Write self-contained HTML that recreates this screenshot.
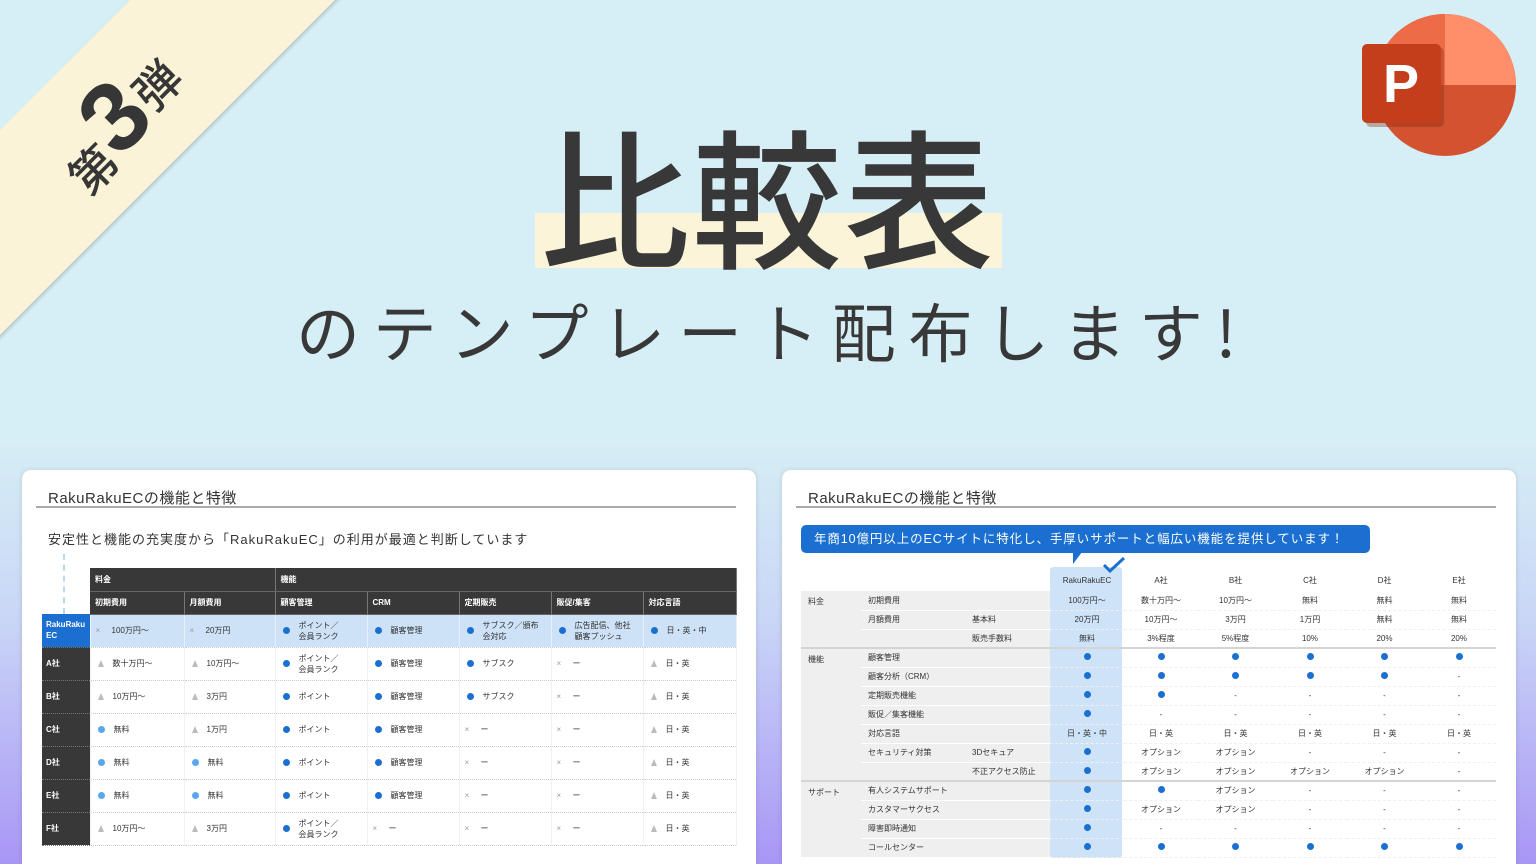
<!DOCTYPE html>
<html><head><meta charset="utf-8">
<style>
*{margin:0;padding:0;box-sizing:border-box}
html{width:1536px;height:864px;overflow:hidden;background:#a996f5}
body{width:1536px;height:864px;overflow:hidden;position:relative;font-family:"Liberation Sans","Noto Sans CJK JP",sans-serif;color:#333;
background:linear-gradient(180deg,#d6eef5 0px,#d6eef5 440px,#c9d6f6 620px,#a996f5 864px)}
.band{position:absolute;width:700px;height:145px;background:#fbf3d8;transform:rotate(-45deg);transform-origin:center;left:-251px;top:61px;box-shadow:0 2px 3px rgba(0,0,0,.18)}
.bandtxt{position:absolute;left:4px;top:66px;width:220px;height:100px;transform:rotate(-45deg);font-family:"Noto Sans CJK JP",sans-serif;font-weight:500;color:#363636;display:flex;align-items:flex-end;justify-content:center;gap:2px}
.title{position:absolute;left:0;width:1536px;top:98px;text-align:center;font-family:"Noto Sans CJK JP",sans-serif;font-weight:500;font-size:150px;line-height:190px;color:#383838;letter-spacing:2px}
.hl{position:absolute;left:535px;top:213px;width:467px;height:55px;background:#fcf4d8}
.sub{position:absolute;left:296px;width:1000px;top:280px;font-family:"Noto Sans CJK JP",sans-serif;font-weight:400;font-size:64px;line-height:100px;letter-spacing:12.8px;color:#383838;white-space:nowrap}
.panel{position:absolute;top:470px;width:734px;height:394px;background:#fff;border-radius:9px 9px 0 0;box-shadow:0 0 6px rgba(0,0,0,.12)}
.ptitle{position:absolute;left:26px;top:17px;font-size:15px;color:#333;letter-spacing:.5px}
.uline{position:absolute;left:14px;top:36px;width:700px;height:2px;background:#aaa}
.lt{position:absolute;left:20px;top:98px;border-collapse:collapse;table-layout:fixed;font-size:8px}
.lt td{height:33px;padding-left:5px;border-bottom:1px dotted #ccc;white-space:nowrap;line-height:11px}
.lt tr.h td{background:#383838;color:#fff;height:23px;border-bottom:1px solid #666;border-right:1px solid #777;font-weight:bold}
.lt td.n{background:#383838;color:#fff;border-bottom:1px dotted #777;font-weight:bold;padding-left:4px}
.lt tr.r td{background:#cde1f7;border-right:1px solid #e8f0fa}
.lt tr.r td.n{background:#1a6fd0}
.lt td{border-right:1px solid #f0f0f0}
.m{display:inline-block;width:16px;color:#999;font-size:8px}
.b{display:inline-block;width:7px;height:7px;border-radius:50%;background:#1a6fd0;margin:0 9px 0 2px;vertical-align:middle}
.lb{background:#5aa6ee}
.tri{display:inline-block;width:0;height:0;border-left:3.5px solid transparent;border-right:3.5px solid transparent;border-bottom:7px solid #bbb;margin:0 9px 0 2px;vertical-align:middle}
.bub{position:absolute;left:19px;top:55px;width:569px;height:28px;background:#1a6fd0;border-radius:5px;color:#fff;font-size:12.5px;line-height:28px;padding-left:13px;letter-spacing:0.9px;white-space:nowrap}
.bub:after{content:"";position:absolute;left:272px;top:27px;border-left:0 solid transparent;border-right:9px solid transparent;border-top:12px solid #1a6fd0}
.hcol{position:absolute;left:268px;top:97px;width:72px;height:291px;background:#cfe3f8;border-radius:3px}
.rt{position:absolute;left:19px;top:100px;border-collapse:collapse;table-layout:fixed;font-size:8px}
.rt td{height:19px;white-space:nowrap;padding:0}
.rt td.c{text-align:center;border-bottom:1px dashed #f0f0f0}
.rt td.g{background:#efefef;padding-left:7px;border-bottom:1px solid #fff}
.rt td.g0{background:#efefef;padding-left:7px;vertical-align:top;padding-top:5px}
.rt tr.sec td{border-top:2px solid #d4d4d4}
.d{display:inline-block;width:7px;height:7px;border-radius:50%;background:#1a6fd0}
</style></head><body>
<div class="band"></div>
<div class="bandtxt"><span style="font-size:46px;line-height:58px">第</span><span style="font-size:98px;line-height:100px;font-family:'Liberation Sans',sans-serif;font-weight:700">3</span><span style="font-size:46px;line-height:86px">弾</span></div>

<svg style="position:absolute;left:1362px;top:14px" width="154" height="142" viewBox="0 0 154 142">
<circle cx="83" cy="71" r="71" fill="#d35230"/>
<path d="M83 0 A71 71 0 0 1 154 71 L83 71 Z" fill="#ff8f6b"/>
<path d="M83 0 A71 71 0 0 0 12 71 L83 71 Z" fill="#ed6c47"/>
<rect x="4" y="33" width="78" height="80" rx="5" fill="#7a2a14" opacity=".35"/>
<rect x="0" y="30" width="79" height="79" rx="5" fill="#c43e1c"/>
<text x="21" y="88" font-family="Liberation Sans" font-weight="bold" font-size="54" fill="#fff">P</text>
</svg>

<div class="hl"></div>
<div class="title">比較表</div>
<div class="sub">のテンプレート配布します!</div>

<div class="panel" style="left:22px">
<div class="ptitle">RakuRakuECの機能と特徴</div>
<div class="uline"></div>
<div style="position:absolute;left:26px;top:59px;font-size:13px;letter-spacing:1px">安定性と機能の充実度から「RakuRakuEC」の利用が最適と判断しています</div>
<div style="position:absolute;left:41px;top:84px;height:60px;border-left:2px dashed #b8d8f2"></div>
<table class="lt">
<colgroup><col style="width:48px"><col style="width:94px"><col style="width:91px"><col style="width:92px"><col style="width:92px"><col style="width:92px"><col style="width:92px"><col style="width:93px"></colgroup>
<tr class="h"><td style="background:transparent;border:none"></td><td colspan="2">料金</td><td colspan="5">機能</td></tr>
<tr class="h"><td style="background:transparent;border:none"></td><td>初期費用</td><td>月額費用</td><td>顧客管理</td><td>CRM</td><td>定期販売</td><td>販促/集客</td><td>対応言語</td></tr>
<tr class="r"><td class="n">RakuRaku<br>EC</td><td><span class="m">×</span>100万円〜</td><td><span class="m">×</span>20万円</td><td><span class="b"></span><span style="display:inline-block;vertical-align:middle">ポイント／<br>会員ランク</span></td><td><span class="b"></span>顧客管理</td><td><span class="b"></span><span style="display:inline-block;vertical-align:middle">サブスク／頒布<br>会対応</span></td><td><span class="b"></span><span style="display:inline-block;vertical-align:middle">広告配信、他社<br>顧客プッシュ</span></td><td><span class="b"></span>日・英・中</td></tr>
<tr><td class="n">A社</td><td><span class="tri"></span>数十万円〜</td><td><span class="tri"></span>10万円〜</td><td><span class="b"></span><span style="display:inline-block;vertical-align:middle">ポイント／<br>会員ランク</span></td><td><span class="b"></span>顧客管理</td><td><span class="b"></span>サブスク</td><td><span class="m">×</span>ー</td><td><span class="tri"></span>日・英</td></tr>
<tr><td class="n">B社</td><td><span class="tri"></span>10万円〜</td><td><span class="tri"></span>3万円</td><td><span class="b"></span>ポイント</td><td><span class="b"></span>顧客管理</td><td><span class="b"></span>サブスク</td><td><span class="m">×</span>ー</td><td><span class="tri"></span>日・英</td></tr>
<tr><td class="n">C社</td><td><span class="b lb"></span>無料</td><td><span class="tri"></span>1万円</td><td><span class="b"></span>ポイント</td><td><span class="b"></span>顧客管理</td><td><span class="m">×</span>ー</td><td><span class="m">×</span>ー</td><td><span class="tri"></span>日・英</td></tr>
<tr><td class="n">D社</td><td><span class="b lb"></span>無料</td><td><span class="b lb"></span>無料</td><td><span class="b"></span>ポイント</td><td><span class="b"></span>顧客管理</td><td><span class="m">×</span>ー</td><td><span class="m">×</span>ー</td><td><span class="tri"></span>日・英</td></tr>
<tr><td class="n">E社</td><td><span class="b lb"></span>無料</td><td><span class="b lb"></span>無料</td><td><span class="b"></span>ポイント</td><td><span class="b"></span>顧客管理</td><td><span class="m">×</span>ー</td><td><span class="m">×</span>ー</td><td><span class="tri"></span>日・英</td></tr>
<tr><td class="n">F社</td><td><span class="tri"></span>10万円〜</td><td><span class="tri"></span>3万円</td><td><span class="b"></span><span style="display:inline-block;vertical-align:middle">ポイント／<br>会員ランク</span></td><td><span class="m">×</span>ー</td><td><span class="m">×</span>ー</td><td><span class="m">×</span>ー</td><td><span class="tri"></span>日・英</td></tr>
</table>
</div>

<div class="panel" style="left:782px">
<div class="ptitle">RakuRakuECの機能と特徴</div>
<div class="uline"></div>
<div class="bub">年商10億円以上のECサイトに特化し、手厚いサポートと幅広い機能を提供しています！</div>
<div class="hcol"></div>
<svg style="position:absolute;left:320px;top:87px" width="24" height="16" viewBox="0 0 24 16"><path d="M2 8 L8 14 L22 1" fill="none" stroke="#1a6fd0" stroke-width="3"/></svg>
<table class="rt">
<colgroup><col style="width:60px"><col style="width:104px"><col style="width:85px"><col style="width:74px"><col style="width:74px"><col style="width:75px"><col style="width:74px"><col style="width:75px"><col style="width:74px"></colgroup>
<tr><td></td><td></td><td></td><td class="c" style="border:none;height:21px">RakuRakuEC</td><td class="c" style="border:none">A社</td><td class="c" style="border:none">B社</td><td class="c" style="border:none">C社</td><td class="c" style="border:none">D社</td><td class="c" style="border:none">E社</td></tr>
<tr><td class="g0" rowspan="3">料金</td><td class="g">初期費用</td><td class="g"></td><td class="c">100万円〜</td><td class="c">数十万円〜</td><td class="c">10万円〜</td><td class="c">無料</td><td class="c">無料</td><td class="c">無料</td></tr>
<tr><td class="g">月額費用</td><td class="g">基本料</td><td class="c">20万円</td><td class="c">10万円〜</td><td class="c">3万円</td><td class="c">1万円</td><td class="c">無料</td><td class="c">無料</td></tr>
<tr><td class="g"></td><td class="g">販売手数料</td><td class="c">無料</td><td class="c">3%程度</td><td class="c">5%程度</td><td class="c">10%</td><td class="c">20%</td><td class="c">20%</td></tr>
<tr class="sec"><td class="g0" rowspan="7">機能</td><td class="g">顧客管理</td><td class="g"></td><td class="c"><span class="d"></span></td><td class="c"><span class="d"></span></td><td class="c"><span class="d"></span></td><td class="c"><span class="d"></span></td><td class="c"><span class="d"></span></td><td class="c"><span class="d"></span></td></tr>
<tr><td class="g">顧客分析（CRM）</td><td class="g"></td><td class="c"><span class="d"></span></td><td class="c"><span class="d"></span></td><td class="c"><span class="d"></span></td><td class="c"><span class="d"></span></td><td class="c"><span class="d"></span></td><td class="c">-</td></tr>
<tr><td class="g">定期販売機能</td><td class="g"></td><td class="c"><span class="d"></span></td><td class="c"><span class="d"></span></td><td class="c">-</td><td class="c">-</td><td class="c">-</td><td class="c">-</td></tr>
<tr><td class="g">販促／集客機能</td><td class="g"></td><td class="c"><span class="d"></span></td><td class="c">-</td><td class="c">-</td><td class="c">-</td><td class="c">-</td><td class="c">-</td></tr>
<tr><td class="g">対応言語</td><td class="g"></td><td class="c">日・英・中</td><td class="c">日・英</td><td class="c">日・英</td><td class="c">日・英</td><td class="c">日・英</td><td class="c">日・英</td></tr>
<tr><td class="g">セキュリティ対策</td><td class="g">3Dセキュア</td><td class="c"><span class="d"></span></td><td class="c">オプション</td><td class="c">オプション</td><td class="c">-</td><td class="c">-</td><td class="c">-</td></tr>
<tr><td class="g"></td><td class="g">不正アクセス防止</td><td class="c"><span class="d"></span></td><td class="c">オプション</td><td class="c">オプション</td><td class="c">オプション</td><td class="c">オプション</td><td class="c">-</td></tr>
<tr class="sec"><td class="g0" rowspan="4">サポート</td><td class="g">有人システムサポート</td><td class="g"></td><td class="c"><span class="d"></span></td><td class="c"><span class="d"></span></td><td class="c">オプション</td><td class="c">-</td><td class="c">-</td><td class="c">-</td></tr>
<tr><td class="g">カスタマーサクセス</td><td class="g"></td><td class="c"><span class="d"></span></td><td class="c">オプション</td><td class="c">オプション</td><td class="c">-</td><td class="c">-</td><td class="c">-</td></tr>
<tr><td class="g">障害即時通知</td><td class="g"></td><td class="c"><span class="d"></span></td><td class="c">-</td><td class="c">-</td><td class="c">-</td><td class="c">-</td><td class="c">-</td></tr>
<tr><td class="g">コールセンター</td><td class="g"></td><td class="c"><span class="d"></span></td><td class="c"><span class="d"></span></td><td class="c"><span class="d"></span></td><td class="c"><span class="d"></span></td><td class="c"><span class="d"></span></td><td class="c"><span class="d"></span></td></tr>
</table>
</div>
</body></html>
